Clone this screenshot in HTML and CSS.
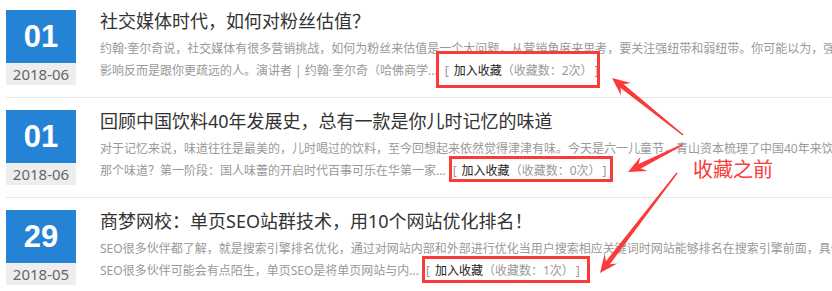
FILE: index.html
```html
<!DOCTYPE html>
<html lang="zh-CN">
<head>
<meta charset="utf-8">
<title>资讯列表</title>
<link rel="stylesheet" href="styles.css">
</head>
<body>
<ul class="news">
  <li class="item">
    <div class="date"><span class="day">01</span><span class="ym">2018-06</span></div>
    <div class="body">
      <h3 class="title">社交媒体时代，如何对粉丝估值？</h3>
      <p class="desc">约翰·奎尔奇说，社交媒体有很多营销挑战，如何为粉丝来估值是一个大问题，从营销角度来思考，要关注强纽带和弱纽带。你可能以为，强纽带对你的影响最大，但其实<br>影响反而是跟你更疏远的人。演讲者 | 约翰·奎尔奇（哈佛商学...<a class="fav" href="#">[<span class="add">加入收藏</span>（收藏数：2次）<span class="close">]</span></a></p>
    </div>
  </li>
  <li class="item">
    <div class="date"><span class="day">01</span><span class="ym">2018-06</span></div>
    <div class="body">
      <h3 class="title">回顾中国饮料40年发展史，总有一款是你儿时记忆的味道</h3>
      <p class="desc">对于记忆来说，味道往往是最美的，儿时喝过的饮料，至今回想起来依然觉得津津有味。今天是六一儿童节，青山资本梳理了中国40年来饮料的发展史，看看有没有你的<br>那个味道？第一阶段：国人味蕾的开启时代百事可乐在华第一家...<a class="fav" href="#">[<span class="add">加入收藏</span>（收藏数：0次）<span class="close">]</span></a></p>
    </div>
  </li>
  <li class="item">
    <div class="date"><span class="day">29</span><span class="ym">2018-05</span></div>
    <div class="body">
      <h3 class="title">商梦网校：单页SEO站群技术，用10个网站优化排名！</h3>
      <p class="desc">SEO很多伙伴都了解，就是搜索引擎排名优化，通过对网站内部和外部进行优化当用户搜索相应关键词时网站能够排名在搜索引擎前面，具体的方法有很多，但是单页<br>SEO很多伙伴可能会有点陌生，单页SEO是将单页网站与内...<a class="fav" href="#">[<span class="add">加入收藏</span>（收藏数：1次）<span class="close">]</span></a></p>
    </div>
  </li>
</ul>

<div class="annot">
  <svg width="832" height="291" viewBox="0 0 832 291" xmlns="http://www.w3.org/2000/svg">
    <g fill="none" stroke="#fb3a3a" stroke-width="3">
      <rect x="437.5" y="52.5" width="161" height="34"/>
      <rect x="450.5" y="157.5" width="161" height="23"/>
      <rect x="423.5" y="257.5" width="165" height="24"/>
    </g>
    <g fill="#fb3a3a">
      <polygon points="612,78 631.05,83.03 623.71,84.19 683.44,134.45 682.56,135.55 620.57,88.09 621.03,95.51"/>
      <polygon points="628,172 640.52,156.79 638.51,163.95 681.69,144.37 682.31,145.63 640.75,168.43 647.68,171.11"/>
      <polygon points="600,273 604.64,253.86 605.95,261.17 676.45,172.57 677.55,173.43 609.91,264.23 617.32,263.62"/>
    </g>
  </svg>
  <span class="label">收藏之前</span>
</div>
</body>
</html>
```

FILE: styles.css
```css
* {
  box-sizing: border-box;
}

html,
body {
  margin: 0;
  padding: 0;
}

body {
  position: relative;
  width: 832px;
  height: 291px;
  overflow: hidden;
  background: #fff;
  font-family: "Noto Sans", "Noto Sans CJK SC", sans-serif;
}

.news {
  list-style: none;
  margin: 0;
  padding: 0 0 0 6px;
}

.item {
  display: flex;
  gap: 24px;
  padding: 12px 0;
  border-bottom: 1px solid #e6e6e6;
}

.item:first-child {
  padding-top: 10px;
}

.date {
  flex: none;
  width: 70px;
  display: flex;
  flex-direction: column;
}

.day {
  height: 53px;
  background: #2483d5;
  color: #fff;
  font: bold 31px/53px "Liberation Sans", sans-serif;
  text-align: center;
}

.ym {
  height: 22px;
  background: #eeeeee;
  color: #666;
  font: 15px/22px "Noto Sans", sans-serif;
  text-align: center;
}

.body {
  flex: none;
  width: 900px;
}

.title {
  margin: 0;
  font-size: 18px;
  font-weight: normal;
  line-height: 22px;
  color: #333;
}

.desc {
  margin: 6px 0 0;
  font-size: 12px;
  line-height: 22px;
  color: #999;
  white-space: nowrap;
}

.fav {
  margin-left: 7px;
  color: #999;
  text-decoration: none;
}

.fav .add {
  margin-left: 5px;
  color: #222;
}

.fav .close {
  margin-left: 8px;
}

.annot {
  position: absolute;
  left: 0;
  top: 0;
  width: 832px;
  height: 291px;
  pointer-events: none;
}

.annot svg {
  display: block;
}

.label {
  position: absolute;
  left: 693px;
  top: 157px;
  font-size: 20px;
  line-height: 26px;
  color: #fb3a3a;
}
```
